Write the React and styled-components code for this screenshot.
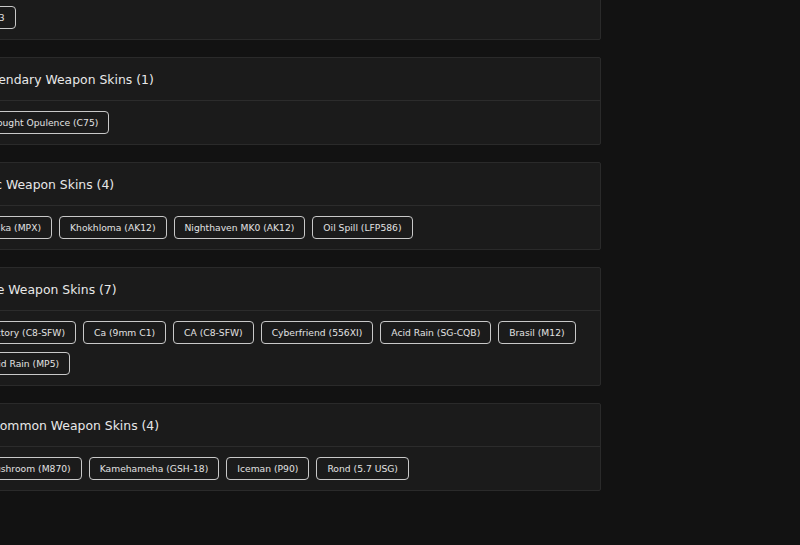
import React from 'react';
import styled, { createGlobalStyle } from 'styled-components';

const GlobalStyle = createGlobalStyle`
  html, body {
    margin: 0;
    padding: 0;
    background: #121212;
    overflow: hidden;
  }
  body {
    font-family: "DejaVu Sans", "Liberation Sans", sans-serif;
    color: #e6e6e6;
  }
`;

const sections = [
  { title: 'Mythic Weapon Skins (1)', skins: ['K33'] },
  { title: 'Legendary Weapon Skins (1)', skins: ['Brought Opulence (C75)'] },
  { title: 'Epic Weapon Skins (4)', skins: ['Polka (MPX)', 'Khokhloma (AK12)', 'Nighthaven MK0 (AK12)', 'Oil Spill (LFP586)'] },
  {
    title: 'Rare Weapon Skins (7)',
    skins: ['Victory (C8-SFW)', 'Ca (9mm C1)', 'CA (C8-SFW)', 'Cyberfriend (556XI)', 'Acid Rain (SG-CQB)', 'Brasil (M12)', 'Acid Rain (MP5)'],
  },
  { title: 'Uncommon Weapon Skins (4)', skins: ['Mushroom (M870)', 'Kamehameha (GSH-18)', 'Iceman (P90)', 'Rond (5.7 USG)'] },
];

export default function App() {
  return (
    <>
      <GlobalStyle />
      <Page>
        <SectionList>
          {sections.map((s) => (
            <Card key={s.title}>
              <CardHeader>{s.title}</CardHeader>
              <CardBody>
                {s.skins.map((skin) => (
                  <SkinTag key={skin}>{skin}</SkinTag>
                ))}
              </CardBody>
            </Card>
          ))}
        </SectionList>
      </Page>
    </>
  );
}

const Page = styled.div`
  width: 800px;
  height: 545px;
  background: #121212;
`;

const SectionList = styled.div`
  display: flex;
  flex-direction: column;
  gap: 17px;
  width: 642px;
  margin-left: -41px;
  margin-top: -48px;
`;

const Card = styled.section`
  background: #1b1b1b;
  border: 1px solid #2a2a2a;
  border-radius: 2px;
`;

const CardHeader = styled.h3`
  margin: 0;
  height: 42px;
  display: flex;
  align-items: center;
  padding: 0 16px;
  border-bottom: 1px solid #2c2c2c;
  font-size: 12.4px;
  font-weight: 500;
  color: #e8e8e8;
`;

const CardBody = styled.div`
  display: flex;
  flex-wrap: wrap;
  gap: 8px 7px;
  padding: 10px 16px;
`;

const SkinTag = styled.span`
  display: inline-flex;
  align-items: center;
  height: 23px;
  box-sizing: border-box;
  padding: 0 10px;
  border: 1px solid #c9c9c9;
  border-radius: 4px;
  font-size: 9.2px;
  color: #e2e2e2;
  white-space: nowrap;
`;
